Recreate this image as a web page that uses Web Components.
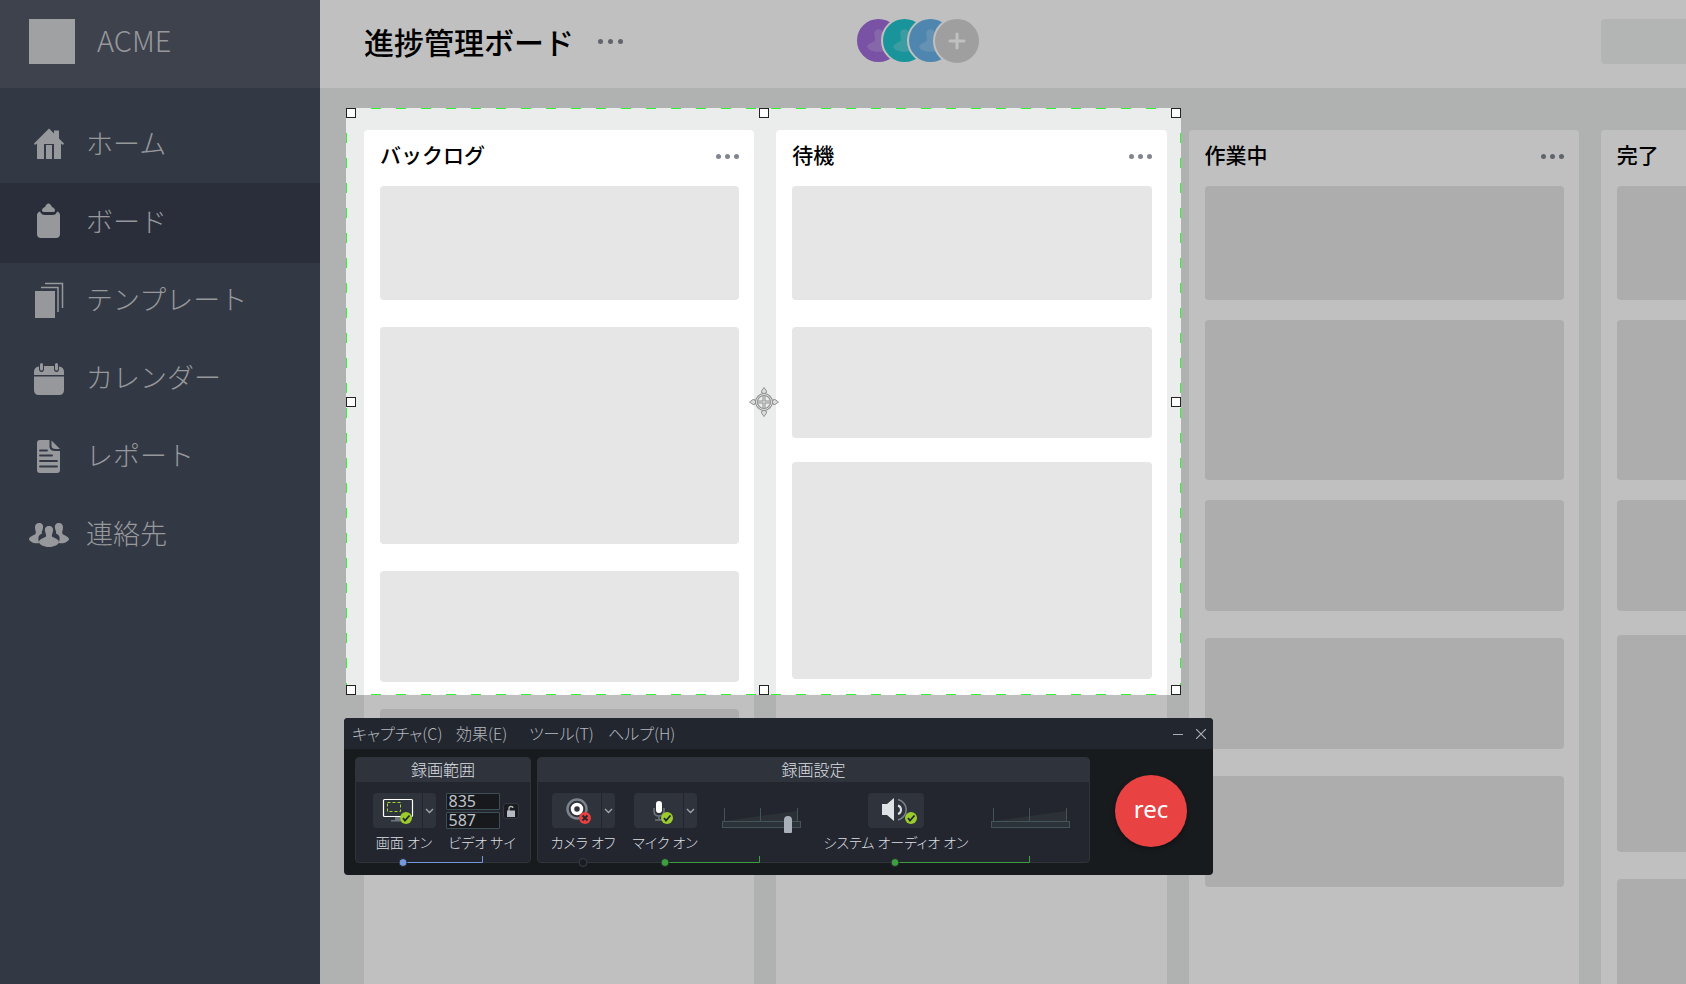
<!DOCTYPE html>
<html lang="ja">
<head>
<meta charset="utf-8">
<title>進捗管理ボード</title>
<style>
  body {
    margin: 0;
    font-family: "Noto Sans CJK JP", "Noto Sans", sans-serif;
  }
</style>
</head>
<body>
<acme-app>
  <side-bar slot="sidebar">
    <nav-item icon="home">ホーム</nav-item>
    <nav-item icon="board" active>ボード</nav-item>
    <nav-item icon="templates">テンプレート</nav-item>
    <nav-item icon="calendar">カレンダー</nav-item>
    <nav-item icon="report">レポート</nav-item>
    <nav-item icon="contacts">連絡先</nav-item>
  </side-bar>
  <board-header>進捗管理ボード</board-header>
  <kanban-board>
    <board-column heading="バックログ">
      <task-card size="m"></task-card>
      <task-card size="xl"></task-card>
      <task-card size="s"></task-card>
      <task-card size="s"></task-card>
    </board-column>
    <board-column heading="待機">
      <task-card size="m"></task-card>
      <task-card size="s" gap="medium"></task-card>
      <task-card size="xl"></task-card>
    </board-column>
    <board-column heading="作業中">
      <task-card size="m" gap="small"></task-card>
      <task-card size="l" gap="small"></task-card>
      <task-card size="s"></task-card>
      <task-card size="s"></task-card>
      <task-card size="s"></task-card>
    </board-column>
    <board-column heading="完了">
      <task-card size="m" gap="small"></task-card>
      <task-card size="l" gap="small"></task-card>
      <task-card size="s" gap="medium"></task-card>
      <task-card size="xl"></task-card>
      <task-card size="xl"></task-card>
    </board-column>
  </kanban-board>
  <capture-region slot="overlay"></capture-region>
  <recorder-window slot="overlay"></recorder-window>
</acme-app>

<script>
function define(name, render) {
  customElements.define(name, class extends HTMLElement {
    constructor() {
      super();
      this.attachShadow({ mode: "open" });
    }
    connectedCallback() {
      this.shadowRoot.innerHTML = render(this);
    }
  });
}

const sidePerson = "M11 7C14 7 15.500 9 15 12C14.500 15 13.500 15 14 17.500C10 19 9.500 23 11.500 27C6 28.500 1 25 1 23C1 21 6 19 7.500 18C8.500 16 7 14.500 7 11.500C7 8.500 8.500 7 11 7Z";
const navIcons = {
  home: `<path d="M21 2.500L26 7.500V4.500H31V12.500L36 17.500L35 19L33 17.500V33H26V18H16V33H9V17.500L7 19L6 17.500Z"/><path d="M18 19H24V33H18Z"/>`,
  board: `<path d="M12 7.500C13 10 14.500 11 17 11H24C27 11 28.500 10 29 7.500C31 8 32 9.500 32 11V30Q32 34 28 34H13Q9 34 9 30V11C9 9.500 10 8 12 7.500Z"/><path d="M14 6.500C14 4.500 15.500 3.500 17 3C18 1 19-.500 20.500-.500S23 1 24 3C25.500 3.500 27 4.500 27 6.500Q27 8 25 8H16Q14 8 14 6.500Z"/>`,
  templates: `<path d="M7 9H27V36H7Z"/><path d="M13 5.500H30V30M17 1.500H34.500V26" fill="none" stroke="currentColor" stroke-width="1.500"/>`,
  calendar: `<path d="M6 15V12Q6 7 11 6.500V9Q11 12 13.500 12T16 9V6H26V9Q26 12 28.500 12T31 9V6.500Q36 7 36 12V15Z"/><path d="M6 16.500H36V30Q36 35 31 35H11Q6 35 6 30Z"/><path d="M13.500 4.500V9M28.500 4.500V9" stroke="currentColor" stroke-width="3" stroke-linecap="round"/>`,
  report: `<path d="M12 2H21.500V9Q22 13 27 13H32V32Q32 35 29 35H12Q9 35 9 32V5Q9 2 12 2Z"/><path d="M23.500 2.500L32 11H28Q23.500 11 23.500 8Z"/><path d="M12 12.500H19M12 17.500H24M12 23H29M12 28.500H29" stroke="#333944" stroke-width="1.800" stroke-linecap="round"/>`,
  contacts: `<path d="${sidePerson}"/><path transform="matrix(-1 0 0 1 42 0)" d="${sidePerson}"/><path d="M21 10C24 10 25.500 12 25 15C24.500 18 23.500 18.500 24 20.500C25 21.500 31 23 31 26C31 28.500 26 31 21 31S11 28.500 11 26C11 23 17 21.500 18 20.500C18.500 18.500 17.500 18 17 15C16.500 12 18 10 21 10Z"/>`
};

define("acme-app", () => `
  <style>
    :host { display: grid; grid-template-columns: 320px 1fr; height: 100vh; overflow: hidden; }
    main { position: relative; display: flex; flex-direction: column; min-width: 0; overflow: hidden; background: #eaedec; }
  </style>
  <slot name="sidebar"></slot>
  <main><slot></slot><slot name="overlay"></slot></main>`);

define("side-bar", () => `
  <style>
    :host { display: block; background: #333944; color: #96989c; }
    header { display: flex; align-items: center; gap: 22px; height: 88px; box-sizing: border-box; padding: 0 29px 6px; background: #3d424d; font-size: 29px; line-height: 40px; font-weight: 300; }
    .logo { width: 46px; height: 45px; background: #a0a1a3; }
    .name { padding-bottom: 4px; }
    nav { padding-top: 17px; }
  </style>
  <header><span class="logo"></span><span class="name">ACME</span></header>
  <nav><slot></slot></nav>`);

define("nav-item", el => `
  <style>
    :host { display: block; }
    :host([active]) { background: #292e3a; box-shadow: 0 2px #292e3a; }
    a { display: flex; align-items: center; gap: 16px; height: 78px; padding-left: 28px; color: inherit; text-decoration: none; font-size: 27px; font-weight: 300; line-height: 40px; }
    .text { padding-bottom: 2px; }
    svg { width: 42px; height: 36px; fill: currentColor; overflow: visible; }
  </style>
  <a href="#${el.getAttribute("icon")}"><svg viewBox="0 0 42 36" aria-hidden="true">${navIcons[el.getAttribute("icon")]}</svg><span class="text"><slot></slot></span></a>`);

define("more-button", () => `
  <style>
    :host { display: block; }
    button { display: flex; gap: var(--dot-gap, 4px); padding: 0; border: 0; background: none; }
    i { width: 5px; height: 5px; border-radius: 50%; background: #80858f; }
  </style>
  <button aria-label="メニュー"><i></i><i></i><i></i></button>`);

define("user-avatar", () => `
  <style>
    :host { display: block; width: 43px; height: 43px; border: 2px solid #fff; border-radius: 50%; overflow: hidden; background: var(--tone); }
    svg { display: block; width: 43px; height: 43px; }
  </style>
  <svg viewBox="0 0 42 42" aria-hidden="true"><path fill="#fff" fill-opacity=".2" d="M21 10C24.500 10 25.500 13 25 16C24.500 19 23.500 19 24 21C25 23 31 24 31 27C31 30 26 32 21 32S10 30 10 27C10 24 16 23 17.500 21C18 19 17.500 19 17 16C16.500 13 17.500 10 21 10Z"/></svg>`);

define("board-header", () => `
  <style>
    :host { display: flex; align-items: center; height: 88px; box-sizing: border-box; padding: 0 0 6px 44px; background: #fff; }
    .title { display: flex; align-items: center; gap: 24px; flex: 0 0 491px; --dot-gap: 5px; }
    h1 { margin: 0; font-size: 30px; line-height: 44px; font-weight: 500; }
    .team { display: flex; flex: 1; }
    .team > * { margin-right: -21px; position: relative; }
    .add { width: 48px; height: 48px; padding: 0; border: 2px solid #fff; border-radius: 50%; background: #d3d3d3; }
    .add svg { display: block; margin: auto; }
    .tool { width: 85px; height: 45px; border-radius: 4px 0 0 4px; background: #eef1f1; }
  </style>
  <div class="title"><h1><slot></slot></h1><more-button></more-button></div>
  <div class="team">
    <user-avatar style="--tone:#a16ddb"></user-avatar>
    <user-avatar style="--tone:#23c5ce"></user-avatar>
    <user-avatar style="--tone:#69b2ea"></user-avatar>
    <button class="add" aria-label="メンバーを追加"><svg width="18" height="18"><path d="M9 2V16M2 9H16" stroke="#fff" stroke-width="3" stroke-linecap="round"/></svg></button>
  </div>
  <div class="tool"></div>`);

define("kanban-board", () => `
  <style>
    :host { display: grid; grid-template-columns: repeat(4, 1fr); gap: 22px; flex: 1; min-height: 0; padding: 42px 0 0 44px; margin-right: -305px; }
  </style>
  <slot></slot>`);

define("board-column", el => `
  <style>
    :host { display: flex; flex-direction: column; min-height: 0; padding: 0 15px 0 16px; border-radius: 4px 4px 0 0; background: #fff; }
    header { display: flex; align-items: center; justify-content: space-between; flex: none; height: 56px; box-sizing: border-box; padding-bottom: 4px; }
    h2 { margin: 0; padding-bottom: 4px; font-size: 21px; line-height: 30px; font-weight: 500; }
  </style>
  <header><h2>${el.getAttribute("heading")}</h2><more-button></more-button></header>
  <slot></slot>`);

define("task-card", () => `
  <style>
    :host { display: block; flex: none; height: 111px; margin-bottom: 27px; border-radius: 4px; background: #e6e6e6; }
    :host([size="m"]) { height: 114px; }
    :host([size="l"]) { height: 160px; }
    :host([size="xl"]) { height: 217px; }
    :host([gap="small"]) { margin-bottom: 20px; }
    :host([gap="medium"]) { margin-bottom: 24px; }
  </style>`);

const arrowTip = "M0-14.500C1-12.500 3-11.500 2.500-9.500L1-9V-7H-1V-9L-2.500-9.500C-3-11.500-1-12.500 0-14.500Z";
define("capture-region", () => `
  <style>
    :host {
      --dash: #2ff42f 0 10px, transparent 10px 25px;
      position: absolute; left: 26px; top: 108px; width: 835px; height: 587px;
      box-shadow: 0 0 0 2000px rgb(0 0 0 / .247);
      background:
        repeating-linear-gradient(90deg, var(--dash)) 0 0 / 100% 1px no-repeat,
        repeating-linear-gradient(90deg, var(--dash)) 0 100% / 100% 1px no-repeat,
        repeating-linear-gradient(180deg, var(--dash)) 0 0 / 1px 100% no-repeat,
        repeating-linear-gradient(180deg, var(--dash)) 100% 0 / 1px 100% no-repeat;
      display: grid; grid-template-columns: repeat(3, auto); justify-content: space-between; align-content: space-between; place-items: center;
    }
    i { width: 8px; height: 8px; border: 1px solid #222; background: #fff; }
    svg { grid-area: 2 / 2; margin: -10px; }
    .a { grid-area: 1 / 1; } .b { grid-area: 1 / 2; } .c { grid-area: 1 / 3; }
    .d { grid-area: 2 / 1; } .e { grid-area: 2 / 3; }
    .f { grid-area: 3 / 1; } .g { grid-area: 3 / 2; } .h { grid-area: 3 / 3; }
  </style>
  <i class="a"></i><i class="b"></i><i class="c"></i><i class="d"></i>
  <svg width="30" height="30" viewBox="-15 -15 30 30" fill="none" aria-hidden="true">
    <g fill="#dcdcdc" stroke="#8f8f8f" stroke-width="1">
      ${[0, 90, 180, 270].map(a => `<path transform="rotate(${a})" d="${arrowTip}"/>`).join("")}
    </g>
    <circle r="7.500" stroke="#8f8f8f" stroke-width="3"/><circle r="7.500" stroke="#e2e2e2"/>
    <path d="M-6 0H6M0-6V6" stroke="#8f8f8f" stroke-width="3"/><path d="M-6 0H6M0-6V6" stroke="#e2e2e2"/>
  </svg>
  <i class="e"></i><i class="f"></i><i class="g"></i><i class="h"></i>`);

const okBadge = x => `<circle cx="${x}" cy="25" r="6" fill="#9bcb2c"/><path d="M${x - 3} 25L${x - 1} 27.500L${x + 3.5} 22.500" fill="none" stroke="#23272e" stroke-width="1.800"/>`;
const deviceIcons = {
  screen: `<path d="M22 24H27V27H30V28.500H18V27H22Z" fill="#6d747d"/><rect x="10.500" y="6.500" width="29" height="17" rx="1" fill="none" stroke="#fff" stroke-width="1.200"/><rect x="14.500" y="9.500" width="13" height="9" fill="none" stroke="#a4d52c" stroke-dasharray="3 2"/>${okBadge(33)}`,
  camera: `<circle cx="25" cy="16" r="9.500" fill="none" stroke="#7c838c" stroke-width="2.500"/><circle cx="25" cy="16" r="4.500" fill="none" stroke="#fff" stroke-width="3.500"/><circle cx="33" cy="25" r="6" fill="#e83f41"/><path d="M30.500 22.500L35.500 27.500M35.500 22.500L30.500 27.500" stroke="#23272e" stroke-width="1.800"/>`,
  mic: `<path d="M20 15V18Q20 23 25 23T30 18V15M25 23V27M21 27H29" fill="none" stroke="#6d747d" stroke-width="1.500"/><rect x="22" y="8" width="6" height="12" rx="3" fill="#fff"/>${okBadge(33)}`,
  audio: `<path d="M14 11H19L26 5V28L19 22H14Z" fill="#dfe3e6"/><path d="M30 12.500A4.500 4.500 0 0 1 30 21" fill="none" stroke="#dfe3e6" stroke-width="2"/><path d="M30 6.500A10.500 10.500 0 0 1 30 27" fill="none" stroke="#7c838c" stroke-width="1.500"/>${okBadge(43)}`
};

define("device-toggle", el => {
  const icon = el.getAttribute("icon");
  const split = !el.hasAttribute("single");
  return `
  <style>
    :host { display: flex; flex-direction: column; align-items: center; gap: 4px; font-size: 14px; line-height: 20px; white-space: nowrap; }
    .split { display: flex; gap: 1px; height: 35px; }
    button { padding: 0; border: 0; background: #2f343c; border-radius: 4px; }
    .split button:not(:only-child):first-child { border-radius: 4px 0 0 4px; }
    .split button:last-child:not(:first-child) { border-radius: 0 4px 4px 0; }
    svg { display: block; }
  </style>
  <div class="split">
    <button aria-labelledby="t"><svg width="${split ? 49 : 56}" height="35" aria-hidden="true">${deviceIcons[icon]}</svg></button>
    ${split ? `<button aria-label="オプション"><svg width="13" height="35"><path d="M3 16L6.500 19.500L10 16" fill="none" stroke="#a0a6af" stroke-width="1.300"/></svg></button>` : ""}
  </div>
  <span id="t"><slot></slot></span>`;
});

define("size-fields", () => `
  <style>
    :host { display: flex; flex-direction: column; align-items: center; gap: 4px; font-size: 14px; line-height: 20px; white-space: nowrap; }
    .row { display: flex; align-items: center; gap: 3px; height: 35px; }
    .inputs { display: grid; gap: 2px; }
    input { width: 54px; height: 17px; box-sizing: border-box; padding: 0 2px; border: 1px solid #3d5055; border-radius: 1px; background: #17191d; color: #bfc4cb; font: 16px/15px "Noto Sans", sans-serif; }
    button { width: 16px; height: 16px; padding: 0; border: 1px solid #33383e; border-radius: 3px; background: #191b1f; }
    svg { display: block; margin: auto; }
  </style>
  <div class="row">
    <div class="inputs"><input id="w" value="835"><input id="h" value="587" aria-label="高さ"></div>
    <button aria-label="縦横比を固定"><svg width="10" height="12"><path d="M1 5.500H9V12H1Z" fill="#b4bac2"/><path d="M3 6V3.500Q3 1.500 5 1.500T7 3" fill="none" stroke="#b4bac2" stroke-width="1.300"/></svg></button>
  </div>
  <label for="w">ビデオ サイ</label>`);

define("level-meter", el => `
  <style>
    :host { display: grid; justify-content: center; align-content: start; padding-top: 15px; }
    svg { display: block; }
    .track { display: grid; width: 79px; height: 7px; box-sizing: border-box; border: 1px solid #435459; background: #2c3239; align-items: center; }
    input { -webkit-appearance: none; appearance: none; width: 77px; height: 17px; margin: -6px 0; background: none; }
    input::-webkit-slider-thumb { -webkit-appearance: none; width: 8px; height: 17px; border-radius: 4px 4px 1px 1px; background: #aab0b9; }
  </style>
  <svg width="79" height="13" aria-hidden="true"><path d="M3 13L75 3V13Z" fill="#2c3138"/><path d="M2.500 0V13M38.500 0V13M75.500 0V13" stroke="#435459"/></svg>
  <div class="track">${el.hasAttribute("value") ? `<input type="range" aria-label="マイクの音量" value="${el.getAttribute("value")}">` : ""}</div>`);

define("tool-panel", el => `
  <style>
    :host { position: relative; display: block; height: 106px; box-sizing: border-box; border: 1px solid #2f343b; border-radius: 4px; background: #23262e; color: #dcdfe2; }
    h3 { margin: 0; height: 24px; border-radius: 3px 3px 0 0; background: #2f343c; text-align: center; font-size: 16px; line-height: 22px; font-weight: 300; }
    .body { display: grid; padding: var(--inset); grid-template-columns: var(--tracks); }
  </style>
  <h3>${el.getAttribute("heading")}</h3>
  <div class="body"><slot></slot></div>
  <slot name="links"></slot>`);

define("link-line", el => {
  const segments = el.getAttribute("links").split(" ").map(s => s.split(","));
  return `
  <style>
    :host { position: absolute; left: 0; bottom: -7px; }
    svg { display: block; overflow: visible; }
  </style>
  <svg width="10" height="13" aria-hidden="true">${segments.map(([color, from, to]) =>
    (to ? `<path d="M${from} 6.500H${to}.5V0" fill="none" stroke="${color}"/>` : "") +
    `<circle cx="${from}" cy="6.500" r="4" fill="${to ? color : "#191c20"}" stroke="${to ? "#23262e" : "#3a3f47"}"/>`).join("")}</svg>`;
});

define("recorder-window", () => `
  <style>
    :host { position: absolute; left: 24px; top: 718px; width: 869px; border-radius: 4px; overflow: hidden; background: #181b1e; font-weight: 300; font-feature-settings: "palt"; }
    header { display: flex; align-items: center; justify-content: space-between; height: 31px; padding: 0 7px 0 8px; background: #22262e; }
    menu { display: grid; grid-template-columns: 104px 73px 79px auto; margin: 0; padding: 0 0 2px; list-style: none; }
    menu button { padding: 0; border: 0; background: none; color: #b3b8bf; font: inherit; font-feature-settings: inherit; font-size: 16px; line-height: 24px; }
    .window { display: flex; gap: 13px; }
    .window button { padding: 0; border: 0; background: none; }
    svg { display: block; }
    .body { display: grid; grid-template-columns: 176px 553px 1fr; gap: 6px; padding: 8px 0 12px 11px; }
    .area { --inset: 11px 9px 0; --tracks: 78px 78px; }
    .settings { --inset: 11px 0 0; --tracks: 90px 74px 119px 150px 1fr; }
    .rec { place-self: center; width: 72px; height: 72px; margin: 2px 7px 0 0; padding: 0 0 4px; border: 0; border-radius: 50%; background: #e84242; box-shadow: 0 2px 4px #101214; color: #fff; font: 400 24px/30px "Noto Sans", sans-serif; }
  </style>
  <header>
    <menu>
      <li><button>キャプチャ(C)</button></li>
      <li><button>効果(E)</button></li>
      <li><button>ツール(T)</button></li>
      <li><button>ヘルプ(H)</button></li>
    </menu>
    <div class="window">
      <button aria-label="最小化"><svg width="10" height="10"><path d="M0 5.500H10" stroke="#a9afb8"/></svg></button>
      <button aria-label="閉じる"><svg width="10" height="10"><path d="M0 0L10 10M10 0L0 10" stroke="#a9afb8" stroke-width="1.200"/></svg></button>
    </div>
  </header>
  <div class="body">
    <tool-panel class="area" heading="録画範囲">
      <device-toggle icon="screen">画面 オン</device-toggle>
      <size-fields></size-fields>
      <link-line slot="links" links="#7399dc,47,126"></link-line>
    </tool-panel>
    <tool-panel class="settings" heading="録画設定">
      <device-toggle icon="camera">カメラ オフ</device-toggle>
      <device-toggle icon="mic">マイク オン</device-toggle>
      <level-meter value="88"></level-meter>
      <device-toggle icon="audio" single>システム オーディオ オン</device-toggle>
      <level-meter></level-meter>
      <link-line slot="links" links="#3a3f47,45 #3c9e3e,127,221 #3c9e3e,357,491"></link-line>
    </tool-panel>
    <button class="rec">rec</button>
  </div>`);
</script>
</body>
</html>
